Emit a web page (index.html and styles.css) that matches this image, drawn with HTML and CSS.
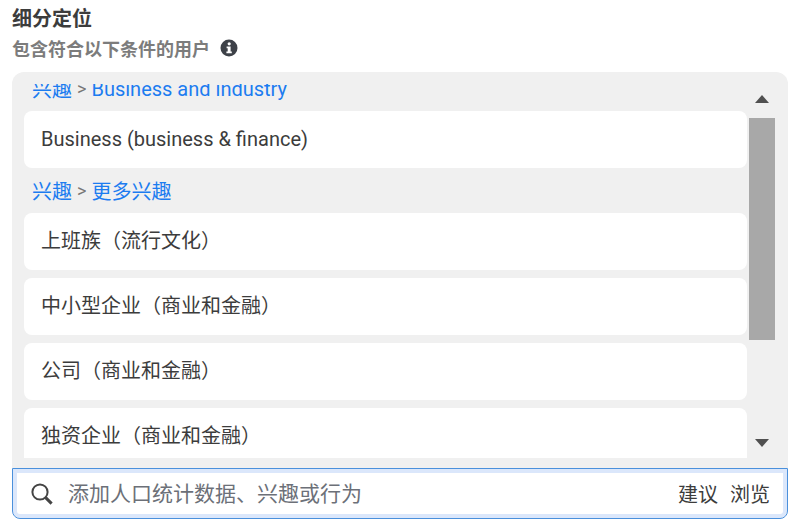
FILE: index.html
```html
<!DOCTYPE html>
<html lang="zh-CN">
<head>
  <meta charset="UTF-8" />
  <meta name="viewport" content="width=device-width, initial-scale=1.0"/>
  <title>细分定位</title>
  <link rel="stylesheet" href="styles.css">
</head>
<body>
  <main class="targeting">
    <h1 class="title">细分定位</h1>
    <div class="subtitle">
      <label for="search">包含符合以下条件的用户</label>
      <svg class="info" viewBox="0 0 18 18" aria-hidden="true">
        <circle cx="9" cy="9" r="8.5" fill="#3d4148"/>
        <circle cx="9.2" cy="4.8" r="1.6" fill="#fff"/>
        <path d="M6.6 7.4h4v5h1.2v1.8H6.4v-1.8h1.3V9.2H6.6z" fill="#fff"/>
      </svg>
    </div>

    <div class="panel">
      <div class="list">
        <div class="list-inner">
          <div class="path"><a href="#">兴趣</a><span>&gt;</span><a href="#">Business and industry</a></div>
          <div class="group">
            <div class="item">Business (business &amp; finance)</div>
          </div>
          <div class="path"><a href="#">兴趣</a><span>&gt;</span><a href="#">更多兴趣</a></div>
          <div class="group">
            <div class="item">上班族（流行文化）</div>
            <div class="item">中小型企业（商业和金融）</div>
            <div class="item">公司（商业和金融）</div>
            <div class="item">独资企业（商业和金融）</div>
          </div>
        </div>
      </div>
      <div class="scrollbar">
        <button class="arrow" aria-label="向上"><svg viewBox="0 0 14 8"><path d="M0 8L7 0l7 8z"/></svg></button>
        <div class="thumb"></div>
        <button class="arrow down" aria-label="向下"><svg viewBox="0 0 14 8"><path d="M0 0h14L7 8z"/></svg></button>
      </div>
    </div>

    <div class="search">
      <svg class="magnifier" viewBox="0 0 24 24" aria-hidden="true">
        <circle cx="10" cy="10" r="7.6"/>
        <path class="handle" d="M15.6 15.6l6 6"/>
      </svg>
      <input id="search" type="text" placeholder="添加人口统计数据、兴趣或行为">
      <button class="action">建议</button>
      <button class="action">浏览</button>
    </div>
  </main>
</body>
</html>
```

FILE: styles.css
```css
* {
  box-sizing: border-box;
}
body {
  margin: 0;
  background: #fff;
  color: #3c3c3c;
  font-family: Roboto, "Noto Sans CJK SC", sans-serif;
  font-size: 20px;
}
.targeting {
  padding: 5px 12px 0;
}
.title {
  margin: 0;
  font-size: 20px;
  line-height: 28px;
  font-weight: bold;
  color: #3c3c3c;
}
.subtitle {
  display: flex;
  align-items: center;
  gap: 10px;
  margin-bottom: 6px;
  font-size: 18px;
  line-height: 33px;
  font-weight: bold;
  color: #7c7c7c;
}
.info {
  width: 18px;
  height: 18px;
  margin-bottom: 4px;
}
.panel {
  display: flex;
  gap: 2px;
  padding: 12px 13px 10px 12px;
  background: #f0f0f0;
  border-radius: 12px 12px 0 0;
}
.list {
  flex: 1;
  height: 374px;
  overflow: hidden;
}
/* list is scrolled down a little */
.list-inner {
  margin-top: -18px;
}
.path {
  display: flex;
  align-items: center;
  gap: 5px;
  height: 45px;
  padding: 0 8px;
}
.path a {
  color: #1c7cf0;
  text-decoration: none;
}
.path span {
  font-size: 18px;
  color: #777;
}
.group {
  display: flex;
  flex-direction: column;
  gap: 8px;
}
.item {
  padding: 0 17px;
  line-height: 57px;
  background: #fff;
  border-radius: 8px;
}
button {
  padding: 0;
  border: none;
  background: none;
  color: inherit;
  font: inherit;
  cursor: pointer;
}
.scrollbar {
  display: flex;
  flex-direction: column;
  width: 26px;
}
.arrow {
  display: flex;
  align-items: center;
  justify-content: center;
  height: 30px;
}
.arrow svg {
  width: 14px;
  height: 8px;
  fill: #505050;
}
.thumb {
  height: 222px;
  margin-top: 4px;
  background: #a8a8a8;
}
.down {
  margin-top: auto;
}
.search {
  display: flex;
  align-items: center;
  gap: 12px;
  height: 51px;
  padding: 0 17px;
  border: 1px solid #4a90dc;
  border-radius: 0 0 8px 8px;
  box-shadow: inset 0 0 0 4px #dbe7fb;
}
.magnifier {
  width: 24px;
  height: 24px;
  fill: none;
  stroke: #444;
  stroke-width: 2;
}
.handle {
  stroke-width: 3;
}
.search input {
  flex: 1;
  min-width: 0;
  padding: 0 0 0 2px;
  border: none;
  outline: none;
  background: none;
  font: inherit;
  font-size: 21px;
}
.search input::placeholder {
  color: #6c7078;
}
```
